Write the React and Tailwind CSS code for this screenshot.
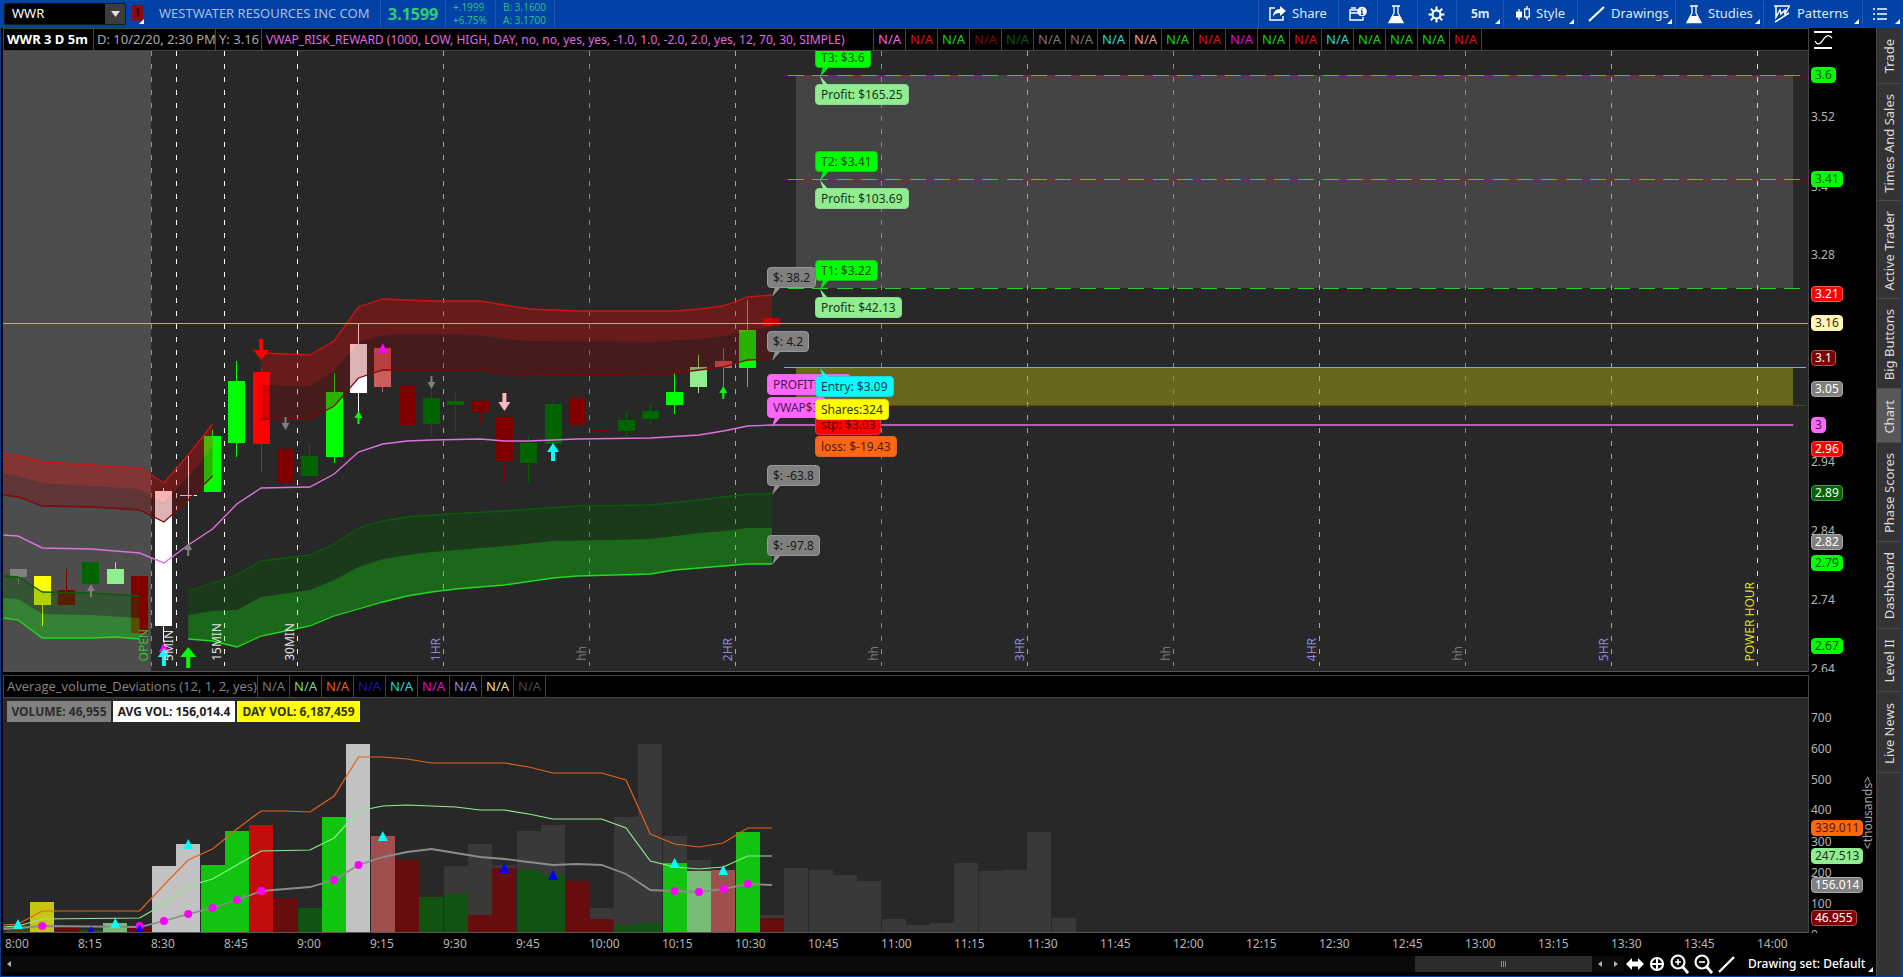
import clsx from 'clsx';

const PLOT_W = 1805;
const PRICE_H = 620;
const VOL_H = 234;
const STEP = 24.32;
const FIRST_BAR = 15;

const barX = (i) => FIRST_BAR + i * STEP;
const pctX = (x) => `${(x / PLOT_W) * 100}%`;
const pctY = (y, h) => `${(y / h) * 100}%`;
const toPoints = (pts) => pts.map(([i, y]) => `${barX(i)},${y}`).join(' ');

const C = {
  gray: '#808080',
  yellow: '#ffff00',
  darkRed: '#800000',
  darkGreen: '#006400',
  lightGreen: '#90ee90',
  white: '#ffffff',
  lime: '#00ff00',
  red: '#ff0000',
  rose: '#cd5c5c',
  cyan: '#00ffff',
  magenta: '#ff00ff',
};

// [color, high, body top, body bottom, low]
const candles = [
  [C.gray, 518, 518, 526, 533],
  [C.yellow, 525, 525, 554, 575],
  [C.darkRed, 518, 539, 554, 554],
  [C.darkGreen, 511, 511, 533, 533],
  [C.lightGreen, 511, 518, 533, 533],
  [C.darkRed, 525, 525, 582, 582],
  [C.white, 437, 440, 575, 591],
  [C.white, 405, 444, 445, 494],
  [C.lime, 379, 385, 441, 441],
  [C.lime, 310, 330, 392, 406],
  [C.red, 317, 321, 393, 421],
  [C.darkRed, 381, 398, 432, 432],
  [C.darkGreen, 392, 405, 425, 425],
  [C.lime, 322, 341, 406, 412],
  [C.white, 272, 293, 342, 361],
  [C.rose, 297, 297, 336, 341],
  [C.darkRed, 304, 335, 374, 386],
  [C.darkGreen, 338, 347, 373, 385],
  [C.darkGreen, 341, 350, 354, 380],
  [C.darkRed, 349, 350, 361, 372],
  [C.darkRed, 362, 366, 410, 431],
  [C.darkGreen, 385, 392, 412, 431],
  [C.darkGreen, 348, 353, 393, 393],
  [C.darkRed, 329, 347, 374, 397],
  [C.darkRed, 349, 379, 380, 380],
  [C.darkGreen, 360, 369, 380, 386],
  [C.darkGreen, 353, 360, 368, 373],
  [C.lime, 322, 341, 354, 363],
  [C.lightGreen, 304, 316, 336, 342],
  [C.rose, 297, 310, 317, 336],
  [C.lime, 249, 279, 317, 336],
  ['#c00000', 267, 267, 275, 275],
];

// each band: outer line, middle boundary, inner line as [bar, y]
const redBands = [
  {
    outer: [[-0.6, 403], [0, 405], [1, 411], [3, 414], [4, 416], [5, 417], [6, 432], [7, 404], [8, 373]],
    mid: [[-0.6, 423], [0, 425], [1, 432], [3, 435], [5, 438], [6, 451], [7, 426], [8, 396]],
    inner: [[-0.6, 444], [0, 446], [1, 455], [3, 456], [5, 459], [6, 471], [7, 449], [8, 425]],
  },
  {
    outer: [[10, 302], [11, 303], [12, 304], [13, 290], [14, 256], [15, 248], [16, 249], [17, 250], [19, 250], [20, 254], [21, 258], [22, 259], [23, 260], [26, 260], [27, 260], [28, 258], [29, 255], [30, 246], [31, 244]],
    mid: [[10, 334], [12, 335], [13, 320], [14, 291], [15, 284], [17, 283], [19, 284], [20, 288], [21, 290], [26, 291], [28, 288], [29, 285], [30, 280], [31, 276]],
    inner: [[10, 368], [12, 368], [13, 355], [14, 327], [15, 319], [19, 319], [20, 322], [21, 324], [23, 323], [26, 324], [27, 322], [28, 319], [29, 316], [30, 309], [31, 308]],
  },
];

const greenBands = [
  {
    inner: [[-0.6, 525], [0, 526], [1, 541], [3, 542], [5, 545]],
    mid: [[-0.6, 547], [0, 548], [1, 563], [3, 564], [5, 567]],
    outer: [[-0.6, 567], [0, 569], [1, 587], [3, 587], [4, 586], [5, 588]],
  },
  {
    inner: [[7, 540], [8, 532], [9, 524], [10, 510], [12, 504], [13, 493], [14, 477], [15, 470], [16, 466], [17, 464], [20, 460], [23, 455], [26, 454], [28, 449], [30, 443], [31, 443]],
    mid: [[7, 564], [8, 560], [9, 559], [10, 546], [12, 539], [13, 529], [14, 516], [15, 508], [16, 504], [17, 501], [20, 495], [22, 490], [24, 489], [26, 488], [28, 482], [29, 480], [30, 477], [31, 477]],
    outer: [[7, 588], [8, 590], [9, 596], [10, 585], [11, 580], [12, 575], [13, 565], [14, 558], [15, 551], [16, 545], [17, 541], [18, 538], [20, 534], [22, 527], [23, 525], [26, 523], [27, 519], [29, 515], [30, 513], [31, 513]],
  },
];

const vwap = [[-0.6, 484], [0, 485], [1, 497], [3, 498], [5, 502], [6, 512], [7, 494], [8, 478], [9, 453], [10, 437], [12, 436], [13, 423], [14, 401], [15, 393], [16, 390], [17, 389], [19, 388], [20, 390], [21, 390], [23, 388], [26, 387], [28, 384], [29, 380], [30, 375], [31, 374], [73, 374]];

const timeLines = [
  { x: 148, color: '#22dd22', label: 'OPEN', text: 'text-[#22cc22]' },
  { x: 173, color: '#ffffff', label: '5MIN', text: 'text-[#e0e0e0]' },
  { x: 221, color: '#ffffff', label: '15MIN', text: 'text-[#e0e0e0]' },
  { x: 294, color: '#ffffff', label: '30MIN', text: 'text-[#e0e0e0]' },
  { x: 440, color: '#9c9cf4', label: '1HR', text: 'text-[#8888dd]' },
  { x: 586, color: '#8a8a8a', label: 'hh', text: 'text-[#777777]' },
  { x: 732, color: '#9c9cf4', label: '2HR', text: 'text-[#8888dd]' },
  { x: 878, color: '#8a8a8a', label: 'hh', text: 'text-[#777777]' },
  { x: 1024, color: '#9c9cf4', label: '3HR', text: 'text-[#8888dd]' },
  { x: 1170, color: '#8a8a8a', label: 'hh', text: 'text-[#777777]' },
  { x: 1316, color: '#9c9cf4', label: '4HR', text: 'text-[#8888dd]' },
  { x: 1462, color: '#8a8a8a', label: 'hh', text: 'text-[#777777]' },
  { x: 1608, color: '#9c9cf4', label: '5HR', text: 'text-[#8888dd]' },
  { x: 1754, color: '#eeee22', label: 'POWER HOUR', text: 'text-[#dddd22]' },
];

const arrows = [
  { bar: 3, tip: 533, size: 'sm', color: C.gray },
  { bar: 7, tip: 492, size: 'sm', color: C.gray },
  { bar: 7, tip: 596, size: 'lg', color: C.lime },
  { bar: 6, tip: 597, size: 'md', color: C.cyan },
  { bar: 10, tip: 309, size: 'lg', color: C.red, down: true },
  { bar: 11, tip: 379, size: 'sm', color: C.gray, down: true },
  { bar: 14, tip: 360, size: 'sm', color: C.lime },
  { bar: 17, tip: 338, size: 'sm', color: C.gray, down: true },
  { bar: 20, tip: 360, size: 'md', color: '#ffb6c1', down: true },
  { bar: 22, tip: 392, size: 'md', color: C.cyan },
  { bar: 29, tip: 335, size: 'sm', color: C.lime },
];

const bubbles = [
  { x: 764, y: 216, text: '$: 38.2', color: 'gray', tail: 'down' },
  { x: 764, y: 280, text: '$: 4.2', color: 'gray', tail: 'down' },
  { x: 764, y: 323, text: 'PROFIT$38.2', color: 'pink' },
  { x: 764, y: 346, text: 'VWAP$3', color: 'pink', tail: 'down' },
  { x: 764, y: 414, text: '$: -63.8', color: 'gray', tail: 'down' },
  { x: 764, y: 484, text: '$: -97.8', color: 'gray', tail: 'down' },
  { x: 812, y: -4, text: 'T3: $3.6', color: 'lime', tail: 'down' },
  { x: 812, y: 33, text: 'Profit: $165.25', color: 'lightGreen', tail: 'up' },
  { x: 812, y: 100, text: 'T2: $3.41', color: 'lime', tail: 'down' },
  { x: 812, y: 137, text: 'Profit: $103.69', color: 'lightGreen', tail: 'up' },
  { x: 812, y: 209, text: 'T1: $3.22', color: 'lime', tail: 'down' },
  { x: 812, y: 246, text: 'Profit: $42.13', color: 'lightGreen', tail: 'up' },
  { x: 812, y: 363, text: 'stp: $3.03', color: 'red' },
  { x: 812, y: 385, text: 'loss: $-19.43', color: 'orange' },
  { x: 812, y: 325, text: 'Entry: $3.09', color: 'cyan', tail: 'up' },
  { x: 812, y: 348, text: 'Shares:324', color: 'yellow' },
];

const bubbleStyles = {
  gray: 'bg-[#808080] border-[#989898] text-[#1a1a1a] fill-[#909090]',
  pink: 'bg-[#ff66ff] border-[#ee66ee] text-[#4a1a4a] fill-[#ff66ff]',
  lime: 'bg-[#00ff00] border-[#22bb22] text-[#004d00] fill-[#00ee00]',
  lightGreen: 'bg-[#90ee90] border-[#8cd88c] text-[#1c331c] fill-[#90ee90]',
  red: 'bg-[#ff0000] border-[#dd3333] text-[#5c0000] fill-[#ff0000]',
  orange: 'bg-[#ff6614] border-[#dd6622] text-[#4a1e06] fill-[#ff6614]',
  cyan: 'bg-[#00ffff] border-[#33cccc] text-[#0a3a3a] fill-[#00ffff]',
  yellow: 'bg-[#ffff00] border-[#dddd22] text-[#33330a] fill-[#ffff00]',
};

const priceTicks = [
  [66, '3.52'],
  [136, '3.4'],
  [204, '3.28'],
  [410, '2.94'],
  [479, '2.84'],
  [548, '2.74'],
  [617, '2.64'],
];

const pricePills = [
  [24, '3.6', 'bg-[#00ff00] border-[#00ff00] text-[#004d00]'],
  [128, '3.41', 'bg-[#00ff00] border-[#00ff00] text-[#004d00]'],
  [243, '3.21', 'bg-[#ff0000] border-[#ff5555] text-white'],
  [272, '3.16', 'bg-[#fff5b4] border-[#fff5b4] text-[#33301f]'],
  [307, '3.1', 'bg-[#800000] border-[#b05050] text-white'],
  [337, '3.05', 'bg-[#808080] border-[#aaaaaa] text-white'],
  [373, '3', 'bg-[#ff66ff] border-[#ff66ff] text-[#4a1a4a]'],
  [397, '2.96', 'bg-[#ff0000] border-[#ff5555] text-white'],
  [441, '2.89', 'bg-[#006400] border-[#509050] text-white'],
  [490, '2.82', 'bg-[#808080] border-[#aaaaaa] text-white'],
  [511, '2.79', 'bg-[#00ff00] border-[#00ff00] text-[#004d00]'],
  [594, '2.67', 'bg-[#00ff00] border-[#00ff00] text-[#004d00]'],
];

const V = {
  olive: '#3c4a1c',
  yellow: '#c8c413',
  darkRed: '#670d0d',
  darkGreen: '#115411',
  lightGreen: '#78bc78',
  white: '#c2c2c2',
  lime: '#10c410',
  red: '#c40c0c',
  rose: '#a04e4e',
};

// [color, bar height]
const volumes = [
  [V.olive, 7], [V.yellow, 30], [V.darkRed, 4], [V.darkGreen, 2], [V.lightGreen, 9], [V.darkRed, 4],
  [V.white, 66], [V.white, 88], [V.lime, 67], [V.lime, 101], [V.red, 107], [V.darkRed, 34],
  [V.darkGreen, 24], [V.lime, 115], [V.white, 188], [V.rose, 96], [V.darkRed, 72], [V.darkGreen, 35],
  [V.darkGreen, 38], [V.darkRed, 17], [V.darkRed, 64], [V.darkGreen, 62], [V.darkGreen, 57], [V.darkRed, 51],
  [V.darkRed, 13], [V.darkGreen, 7], [V.darkGreen, 9], [V.lime, 69], [V.lightGreen, 61], [V.rose, 62],
  [V.lime, 100], [V.darkRed, 14],
];

const volOrange = [[-0.6, 227], [0, 226], [1, 213], [5, 213], [6, 187], [7, 162], [8, 151], [9, 131], [10, 113], [11, 113], [12, 114], [13, 98], [14, 59], [15, 59], [16, 61], [17, 65], [18, 65], [20, 65], [21, 69], [22, 75], [23, 75], [24, 75], [25, 82], [26, 136], [27, 146], [28, 149], [29, 145], [30, 130], [31, 130]];
const volGreen = [[-0.6, 229], [0, 228], [1, 221], [5, 220], [6, 206], [7, 188], [8, 181], [9, 167], [10, 153], [12, 152], [13, 140], [14, 113], [15, 108], [16, 107], [17, 108], [18, 109], [19, 112], [20, 112], [21, 116], [22, 121], [24, 121], [25, 130], [26, 163], [27, 169], [28, 171], [29, 169], [30, 158], [31, 158]];
const volAverage = [[-0.6, 231], [0, 230], [1, 228], [5, 229], [6, 223], [7, 216], [8, 210], [9, 202], [10, 193], [12, 189], [13, 182], [14, 167], [15, 159], [16, 154], [17, 151], [18, 155], [19, 159], [20, 161], [21, 164], [22, 167], [23, 166], [24, 167], [25, 176], [26, 192], [27, 193], [28, 194], [29, 191], [30, 186], [31, 187]];
const volDots = [[1, 228], [5, 228], [6, 223], [7, 216], [8, 210], [9, 202], [10, 193], [13, 182], [14, 167], [27, 193], [28, 194], [29, 191], [30, 186]];
const volTriangles = [
  [0, 222, C.cyan], [4, 221, C.cyan], [7, 142, C.cyan], [15, 134, C.cyan], [27, 161, C.cyan], [29, 168, C.cyan],
  [3, 229, '#0000ff'], [5, 227, '#0000ff'], [20, 166, '#0000ff'], [22, 173, '#0000ff'],
];

const volTicks = [[20, '700'], [51, '600'], [82, '500'], [112, '400'], [143, '300'], [174, '200'], [205, '100'], [236, '0']];
const volPills = [
  [129, '339.011', 'bg-[#ff6614] border-[#ff6614] text-[#4a1e06]'],
  [157, '247.513', 'bg-[#90ee90] border-[#90ee90] text-[#1c331c]'],
  [186, '156.014', 'bg-[#808080] border-[#aaaaaa] text-white'],
  [219, '46.955', 'bg-[#800000] border-[#b05050] text-white'],
];

const studyValues = [
  'text-[#e868e8]', 'text-[#d81414]', 'text-[#14d814]', 'text-[#700808]', 'text-[#0c560c]', 'text-[#787878]', 'text-[#787878]',
  'text-[#20d8d8]', 'text-[#e0a0a0]', 'text-[#14d814]', 'text-[#d81414]', 'text-[#d814d8]', 'text-[#14d814]', 'text-[#d81414]',
  'text-[#20d8d8]', 'text-[#14d814]', 'text-[#14d814]', 'text-[#14d814]', 'text-[#d81414]',
];
const volumeValues = [
  'text-[#787878]', 'text-[#80d880]', 'text-[#e06420]', 'text-[#1414c8]', 'text-[#20d8d8]', 'text-[#d814d8]', 'text-[#8c8ce0]',
  'text-[#e0e0a0]', 'text-[#444444]',
];

const times = Array.from({ length: 25 }, (_, i) => {
  const minutes = 480 + i * 15;
  return `${Math.floor(minutes / 60)}:${String(minutes % 60).padStart(2, '0')}`;
});

const sideTabs = [
  ['Trade', 'h-[56px]'],
  ['Times And Sales', 'h-[117px]'],
  ['Active Trader', 'h-[98px]'],
  ['Big Buttons', 'h-[90px]'],
  ['Chart', 'h-[54px]'],
  ['Phase Scores', 'h-[99px]'],
  ['Dashboard', 'h-[87px]'],
  ['Level II', 'h-[63px]'],
  ['Live News', 'h-[81px]'],
];

function Corner() {
  return <span className="absolute right-[3px] bottom-1 border-b-5 border-l-5 border-b-white border-l-transparent" />;
}

function FlaskIcon() {
  return (
    <svg width="16" height="19" viewBox="0 0 16 19" fill="none" stroke="white">
      <path d="M4 1h8M6 1v7L1 17.500h14L10 8V1" strokeWidth="1.300" />
      <path d="M5 11h6l4 7H1z" fill="white" stroke="none" />
    </svg>
  );
}

function ToolButton({ width, label, menu, children }) {
  return (
    <button
      type="button"
      aria-label={label}
      className={clsx('relative flex items-center justify-start gap-[6px] border-l border-[#1c58b4] pl-[10px]', width)}
    >
      {children}
      {menu && <Corner />}
    </button>
  );
}

function TopBar() {
  return (
    <header className="flex h-7 shrink-0 items-stretch bg-[#0042a6] text-[13px] text-[#dfe7f4]">
      <div className="mt-[3px] ml-1 flex h-[22px] w-[122px] overflow-hidden rounded-xs border border-[#1a1a1a] bg-black">
        <input
          aria-label="Symbol"
          defaultValue="WWR"
          className="min-w-0 flex-1 bg-black pl-[7px] text-white outline-none"
        />
        <button type="button" aria-label="Recent symbols" className="flex w-5 items-center justify-center bg-[#3c3c3c]">
          <svg width="9" height="6" viewBox="0 0 9 6" fill="#e0e0e0">
            <path d="M0 0h9L4.500 6z" />
          </svg>
        </button>
      </div>
      <button type="button" aria-label="Link group" className="relative ml-1 w-[17px]">
        <span className="mt-[-3px] ml-[2px] block h-4 w-[11px] rounded-xs bg-[#8c0a14] text-xs leading-4 font-bold text-[#3a0408]">
          1
        </span>
        <Corner />
      </button>
      <div className="flex w-[233px] items-center pl-3 whitespace-nowrap text-[#a9bfe2]">WESTWATER RESOURCES INC COM</div>
      <div className="flex w-[65px] items-center border-l border-[#1c58b4] pl-[7px] text-base font-bold text-[#2fcf6b]">3.1599</div>
      <div className="flex w-[50px] flex-col justify-center border-l border-[#1c58b4] pl-[7px] text-[10px] leading-[13px] text-[#2dbd7a]">
        <span>+.1999</span>
        <span>+6.75%</span>
      </div>
      <div className="flex w-[60px] flex-col justify-center border-x border-[#1c58b4] pl-[7px] text-[10px] leading-[13px] text-[#2dbd7a]">
        <span>B: 3.1600</span>
        <span>A: 3.1700</span>
      </div>
      <nav className="ml-auto flex" aria-label="Chart tools">
        <ToolButton width="w-20">
          <svg width="17" height="16" viewBox="0 0 17 16">
            <path d="M6 2H1v12h13v-4" fill="none" stroke="white" strokeWidth="1.500" />
            <path d="M11 0l6 5-6 5V7C7 7 5 8.500 4 11c0-4.500 2.500-8 7-8z" fill="white" />
          </svg>
          Share
        </ToolButton>
        <ToolButton width="w-[39px]" label="Snapshot">
          <svg width="18" height="16" viewBox="0 0 18 16">
            <path d="M9 4H1v10h13v-3M1 7h8M2 2h5" fill="none" stroke="white" strokeWidth="1.400" />
            <circle cx="13" cy="5.500" r="4.800" fill="white" />
            <path d="M13 5v3.500M13 2.500v1.300M11.800 8.300h2.500M11.800 5h1.200" stroke="#0042a6" strokeWidth="1.300" />
          </svg>
        </ToolButton>
        <ToolButton width="w-10" label="Lab">
          <FlaskIcon />
        </ToolButton>
        <ToolButton width="w-[39px]" label="Settings">
          <svg width="17" height="17" viewBox="0 0 17 17" fill="none" stroke="white">
            <circle cx="8.500" cy="8.500" r="4" strokeWidth="2.200" />
            <path
              d="M8.500 0.500v4M8.500 12.500v4M0.500 8.500h4M12.500 8.500h4M2.800 2.800l2.800 2.800M11.400 11.400l2.800 2.800M14.200 2.800l-2.800 2.800M5.600 11.400l-2.800 2.800"
              strokeWidth="2"
            />
          </svg>
        </ToolButton>
        <ToolButton width="w-[47px]" menu>
          <span className="pl-1 text-xs font-bold">5m</span>
        </ToolButton>
        <ToolButton width="w-[74px]" menu>
          <svg width="16" height="16" viewBox="0 0 16 16">
            <path d="M5 3v11M13 0v14" stroke="white" strokeWidth="1.300" />
            <rect x="2" y="5.500" width="6" height="6" fill="white" />
            <rect x="10.700" y="3" width="4.600" height="8" fill="#0042a6" stroke="white" strokeWidth="1.300" />
          </svg>
          Style
        </ToolButton>
        <ToolButton width="w-[98px]" menu>
          <svg width="17" height="16" viewBox="0 0 17 16">
            <path d="M1 15L16 1" stroke="white" strokeWidth="2.200" />
          </svg>
          Drawings
        </ToolButton>
        <ToolButton width="w-[88px]" menu>
          <FlaskIcon />
          Studies
        </ToolButton>
        <ToolButton width="w-[99px]" menu>
          <svg width="17" height="18" viewBox="0 0 17 18" fill="none" stroke="white" strokeWidth="1.500">
            <path d="M0 1h16M2 1v11l4-7 1 4 4-4v4l4-7M1 17l14-9" />
          </svg>
          Patterns
        </ToolButton>
        <ToolButton width="w-[41px]" label="Menu" menu>
          <svg width="14" height="12" viewBox="0 0 14 12" stroke="white" strokeWidth="1.600">
            <path d="M0 1h2M4 1h10M0 6h2M4 6h10M0 11h2M4 11h10" />
          </svg>
        </ToolButton>
      </nav>
    </header>
  );
}

function StudyRow({ children, colors }) {
  return (
    <div className="flex overflow-hidden border-y border-l border-[#444] text-[13px] leading-[21px] whitespace-nowrap">
      {children}
      {colors.map((color, i) => (
        <span key={i} className={clsx('w-8 shrink-0 border-r border-[#444] pl-1', color)}>
          N/A
        </span>
      ))}
    </div>
  );
}

function Band({ outer, mid, inner, strong, weak, outerStroke, innerStroke }) {
  return (
    <g>
      <polygon points={toPoints([...outer, ...[...mid].reverse()])} fill={strong} fillOpacity="0.3" />
      <polygon points={toPoints([...mid, ...[...inner].reverse()])} fill={weak} fillOpacity="0.3" />
      <polyline points={toPoints(outer)} fill="none" stroke={outerStroke} strokeWidth="1.300" />
      <polyline points={toPoints(inner)} fill="none" stroke={innerStroke} strokeWidth="1.300" />
    </g>
  );
}

const arrowSizes = {
  sm: { w: 4, h: 13, head: 7, stem: 1 },
  md: { w: 6, h: 18, head: 9, stem: 2 },
  lg: { w: 8, h: 21, head: 10, stem: 2 },
};

function Arrow({ bar, tip, size, color, down }) {
  const { w, h, head, stem } = arrowSizes[size];
  const x = barX(bar);
  const d = down ? -1 : 1;
  const pts = [
    [x, tip],
    [x + w, tip + d * head],
    [x + stem, tip + d * head],
    [x + stem, tip + d * h],
    [x - stem, tip + d * h],
    [x - stem, tip + d * head],
    [x - w, tip + d * head],
  ];
  return <polygon points={pts.map((p) => p.join(',')).join(' ')} fill={color} />;
}

function Triangle({ bar, tip, color }) {
  const x = barX(bar);
  return <polygon points={`${x},${tip} ${x + 5},${tip + 10} ${x - 5},${tip + 10}`} fill={color} />;
}

function Bubble({ x, y, text, color, tail }) {
  return (
    <div
      className={clsx(
        'absolute h-[21px] rounded-sm border px-[5px] pt-px text-xs leading-[18px] whitespace-nowrap',
        bubbleStyles[color],
      )}
      style={{ left: pctX(x), top: pctY(y, PRICE_H) }}
    >
      {text}
      {tail === 'down' && (
        <svg className="absolute top-[19px] left-1" width="9" height="10" viewBox="0 0 9 10">
          <path d="M3 0h6L0 10z" />
        </svg>
      )}
      {tail === 'up' && (
        <svg className="absolute top-[-9px] left-1" width="8" height="9" viewBox="0 0 8 9">
          <path d="M0 0L8 9H3z" />
        </svg>
      )}
    </div>
  );
}

function PricePlot() {
  return (
    <div className="relative overflow-hidden border-b border-[#555] bg-[#282828]">
      <svg className="absolute inset-0 h-full w-full" viewBox={`0 0 ${PLOT_W} ${PRICE_H}`} preserveAspectRatio="none">
        <rect width="148" height={PRICE_H} fill="#4d4d4d" />
        <rect x="793" y="24" width="997" height="213" fill="#444444" />
        <rect x="793" y="317" width="997" height="37" fill="#68681c" />

        <g shapeRendering="crispEdges">
          {timeLines.map(({ x, color }) => (
            <line key={x} x1={x + 0.5} x2={x + 0.5} y1="0" y2="615" stroke={color} strokeDasharray="5 8" />
          ))}
        </g>

        <g shapeRendering="crispEdges">
          {candles.map(([color, high, top, bottom, low], i) => {
            const x = Math.floor(barX(i));
            return (
              <g key={i} fill={color}>
                <rect x={x} y={high} width="1" height={low - high} />
                <rect x={x - 8} y={top} width="17" height={bottom - top} />
              </g>
            );
          })}
        </g>

        {redBands.map((b, i) => (
          <Band key={i} {...b} strong="#ff0000" weak="#8b0000" outerStroke="#cc1414" innerStroke="#7c0a0a" />
        ))}
        {greenBands.map((b, i) => (
          <Band key={i} {...b} strong="#00ff00" weak="#006400" outerStroke="#1edc1e" innerStroke="#0a5c0a" />
        ))}
        <polyline points={toPoints(vwap)} fill="none" stroke="#dd74dd" strokeWidth="1.400" />

        <g shapeRendering="crispEdges">
          {[24, 128, 237].map((y) => (
            <line key={y} x1="785" x2="1800" y1={y + 0.5} y2={y + 0.5} stroke="#22d822" strokeDasharray="16 8.300" />
          ))}
          <line x1="781" x2="1803" y1="316.500" y2="316.500" stroke="#33d0d8" />
          <line x1="793" x2="1803" y1="354.500" y2="354.500" stroke="#c01010" />
          <line x1="0" x2={PLOT_W} y1="272.500" y2="272.500" stroke="#b8b078" />
        </g>

        <Triangle bar={6} tip={591} color={C.magenta} />
        <Triangle bar={15} tip={292} color={C.magenta} />
        {arrows.map((a, i) => (
          <Arrow key={i} {...a} />
        ))}
      </svg>

      {timeLines.map(({ x, label, text }) => (
        <div key={x} className="absolute bottom-[10px] -translate-x-full" style={{ left: pctX(x + 1) }}>
          <span className={clsx('block rotate-180 text-xs leading-4 [writing-mode:vertical-rl]', text)}>{label}</span>
        </div>
      ))}
      {bubbles.map((b) => (
        <Bubble key={b.text} {...b} />
      ))}
    </div>
  );
}

function Axis({ ticks, pills, height }) {
  return (
    <>
      {ticks.map(([y, label]) => (
        <span
          key={label}
          className="absolute left-[2px] -translate-y-1/2 text-xs leading-4 text-[#b4b4b4]"
          style={{ top: pctY(y, height) }}
        >
          {label}
        </span>
      ))}
      {pills.map(([y, label, style]) => (
        <span
          key={label}
          className={clsx('absolute left-[2px] h-4 -translate-y-1/2 rounded-sm border px-[3px] text-xs leading-[14px]', style)}
          style={{ top: pctY(y, height) }}
        >
          {label}
        </span>
      ))}
    </>
  );
}

function VolumePlot() {
  return (
    <div className="relative overflow-hidden border-b border-[#555] bg-[#282828]">
      <svg className="absolute inset-0 h-full w-full" viewBox={`0 0 ${PLOT_W} ${VOL_H}`} preserveAspectRatio="none">
        <g shapeRendering="crispEdges">
          {volumes.map(([, h], i) =>
            i >= 6 ? <rect key={i} x={barX(i + 12) - 12} y={VOL_H - h} width="24" height={h} fill="#393939" /> : null,
          )}
          {volumes.map(([color, h], i) => (
            <rect key={i} x={barX(i) - 12} y={VOL_H - h} width="24" height={h} fill={color} />
          ))}
        </g>
        <polyline points={toPoints(volAverage)} fill="none" stroke="#8c8c8c" strokeWidth="1.800" />
        <polyline points={toPoints(volGreen)} fill="none" stroke="#90ee90" strokeWidth="1.200" />
        <polyline points={toPoints(volOrange)} fill="none" stroke="#e0641e" strokeWidth="1.200" />
        {volDots.map(([i, y]) => (
          <circle key={i} cx={barX(i)} cy={y} r="4" fill={C.magenta} />
        ))}
        {volTriangles.map(([i, y, color]) => (
          <Triangle key={i} bar={i} tip={y - 1} color={color} />
        ))}
      </svg>
      <div className="relative flex gap-[2px] pt-[3px] pl-1 text-center text-xs leading-[21px] font-bold whitespace-nowrap">
        <span className="w-[104px] bg-[#808080] text-[#2c2c2c]">VOLUME: 46,955</span>
        <span className="w-[122px] bg-white text-[#222]">AVG VOL: 156,014.4</span>
        <span className="w-[123px] bg-[#ffff00] text-[#33330a]">DAY VOL: 6,187,459</span>
      </div>
    </div>
  );
}

function ScrollRow() {
  return (
    <div className="col-span-2 flex items-stretch">
      <div className="flex flex-1 items-stretch bg-[#0a0a0a]">
        <button type="button" aria-label="Scroll left" className="flex w-3 items-center justify-center">
          <svg width="4" height="6" viewBox="0 0 4 6" fill="#b0b0b0">
            <path d="M4 0v6L0 3z" />
          </svg>
        </button>
        <div className="ml-auto flex w-[177px] items-center justify-center gap-px bg-[#2c2c2c]">
          <span className="h-[6px] w-px bg-[#888]" />
          <span className="h-[6px] w-px bg-[#888]" />
          <span className="h-[6px] w-px bg-[#888]" />
        </div>
        <button type="button" aria-label="Page left" className="flex w-4 items-center justify-center">
          <svg width="4" height="6" viewBox="0 0 4 6" fill="#b0b0b0">
            <path d="M4 0v6L0 3z" />
          </svg>
        </button>
        <button type="button" aria-label="Page right" className="flex w-4 items-center justify-center">
          <svg width="4" height="6" viewBox="0 0 4 6" fill="#b0b0b0">
            <path d="M0 0v6l4-3z" />
          </svg>
        </button>
      </div>
      <div className="relative flex w-[252px] items-center gap-[5px] pl-[2px] text-xs font-medium text-white">
        <button type="button" aria-label="Pan">
          <svg width="18" height="12" viewBox="0 0 18 12" fill="white">
            <path d="M0 6l6-6v3.500h6V0l6 6-6 6V8.500H6V12z" />
          </svg>
        </button>
        <button type="button" aria-label="Crosshair">
          <svg width="16" height="16" viewBox="0 0 16 16" fill="none" stroke="white">
            <circle cx="8" cy="8" r="6" strokeWidth="2.200" />
            <path d="M8 1v14M1 8h14" strokeWidth="2" />
          </svg>
        </button>
        <button type="button" aria-label="Zoom in">
          <svg width="19" height="20" viewBox="0 0 19 20" fill="none" stroke="white">
            <circle cx="8" cy="8" r="6.500" strokeWidth="2.200" />
            <path d="M12.500 12.500L18 19" strokeWidth="2.800" />
            <path d="M8 5v6M5 8h6" strokeWidth="1.600" />
          </svg>
        </button>
        <button type="button" aria-label="Zoom out">
          <svg width="19" height="20" viewBox="0 0 19 20" fill="none" stroke="white">
            <circle cx="8" cy="8" r="6.500" strokeWidth="2.200" />
            <path d="M12.500 12.500L18 19" strokeWidth="2.800" />
            <path d="M5 8h6" strokeWidth="1.600" />
          </svg>
        </button>
        <button type="button" aria-label="Draw line">
          <svg width="17" height="17" viewBox="0 0 17 17">
            <path d="M1 16L16 1" stroke="white" strokeWidth="2.400" />
          </svg>
        </button>
        <button type="button" className="ml-2 leading-4 whitespace-nowrap">
          Drawing set: Default
        </button>
        <span className="absolute right-[3px] bottom-0 border-b-5 border-l-5 border-b-white border-l-transparent" />
      </div>
    </div>
  );
}

export default function App() {
  return (
    <div className="flex h-screen min-h-[640px] flex-col border-b border-[#0042a6] bg-black font-['Noto_Sans','Open_Sans',sans-serif]">
      <TopBar />
      <div className="flex min-h-0 flex-1 border-l border-[#0a3a8a]">
        <main className="grid min-w-0 flex-1 grid-cols-[minmax(0,1fr)_68px] grid-rows-[23px_minmax(0,621fr)_3px_23px_minmax(0,235fr)_23px_16px] pb-1 pl-[2px]">
          <StudyRow colors={studyValues}>
            <span className="w-[90px] shrink-0 border-r border-[#444] pl-[3px] font-bold text-white">WWR 3 D 5m</span>
            <span className="w-[122px] shrink-0 border-r border-[#444] pl-[3px] text-[#a8a8a8]">D: 10/2/20, 2:30 PM</span>
            <span className="w-[46px] shrink-0 border-r border-[#444] pl-[3px] text-[#a8a8a8]">Y: 3.16</span>
            <span className="w-[612px] shrink-0 border-r border-[#444] pl-1 text-xs leading-[21px] text-[#e068e0]">
              VWAP_RISK_REWARD (1000, LOW, HIGH, DAY, no, no, yes, yes, -1.0, 1.0, -2.0, 2.0, yes, 12, 70, 30, SIMPLE)
            </span>
          </StudyRow>
          <div className="flex items-center border-l border-[#444] pl-[5px]">
            <svg width="19" height="18" viewBox="0 0 19 18" fill="none" stroke="white">
              <path d="M0 1h18M0 17h18" strokeWidth="2" />
              <path d="M1 10c2 4 5 4 8-1s6-6 9-2" strokeWidth="1.300" />
            </svg>
          </div>

          <PricePlot />
          <div className="relative overflow-hidden border-l border-[#444]">
            <Axis ticks={priceTicks} pills={pricePills} height={PRICE_H} />
          </div>

          <div className="col-span-2" />

          <StudyRow colors={volumeValues}>
            <span className="w-[254px] shrink-0 border-r border-[#444] pl-[3px] font-['Open_Sans',sans-serif] text-[#888]">
              Average_volume_Deviations (12, 1, 2, yes)
            </span>
          </StudyRow>
          <div className="border-l border-[#444]" />

          <VolumePlot />
          <div className="relative border-l border-[#444]">
            <div className="absolute inset-0 overflow-hidden">
              <Axis ticks={volTicks} pills={volPills} height={VOL_H} />
            </div>
            <span className="absolute top-1/3 right-0 rotate-180 text-xs leading-4 text-[#a0a0a0] [writing-mode:vertical-rl]">
              &lt;thousands&gt;
            </span>
          </div>

          <div className="relative text-xs leading-[22px] text-[#b4b4b4]">
            {times.map((t, i) => (
              <span key={t} className="absolute top-0" style={{ left: pctX(2 + i * 73) }}>
                {t}
              </span>
            ))}
          </div>
          <div />

          <ScrollRow />
        </main>

        <aside className="flex w-[27px] flex-col border-r-2 border-l border-r-[#0042a6] border-l-[#444] bg-[#333333]">
          {sideTabs.map(([label, height]) => (
            <button
              key={label}
              type="button"
              className={clsx(
                'flex shrink-0 items-center justify-center border-b border-[#4a4a4a] pt-[2px] text-[13px] leading-5 whitespace-nowrap text-[#dcdcdc]',
                height,
                label === 'Chart' && 'bg-[#585858]',
              )}
            >
              <span className="rotate-180 [writing-mode:vertical-rl]">{label}</span>
            </button>
          ))}
        </aside>
      </div>
    </div>
  );
}
